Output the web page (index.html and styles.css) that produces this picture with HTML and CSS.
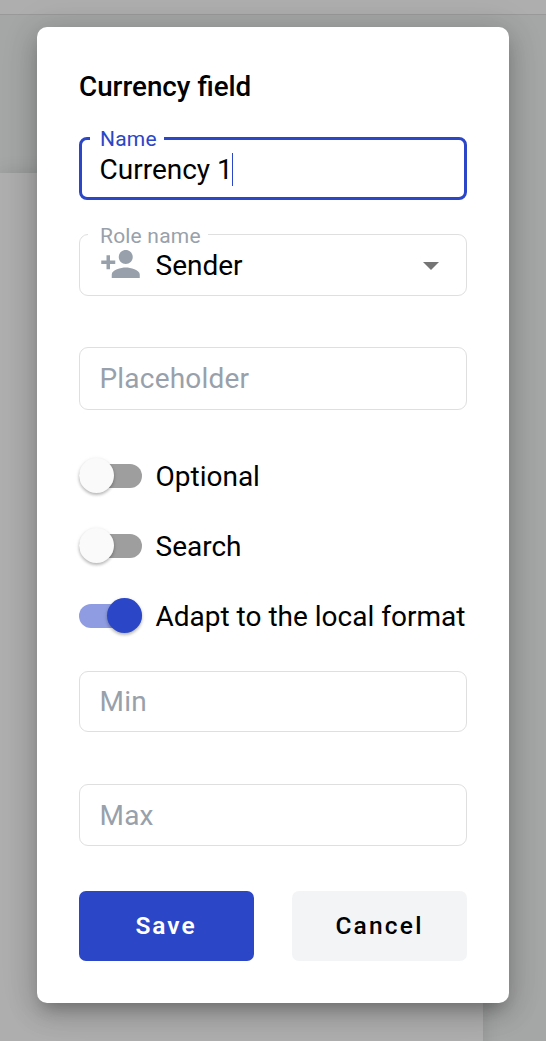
FILE: index.html
```html
<!DOCTYPE html>
<html lang="en">
<head>
<meta charset="utf-8">
<title>Currency field</title>
<link rel="stylesheet" href="styles.css">
</head>
<body>
<div class="backdrop"><div class="toolbar"></div><div class="canvas"><div class="sheet"></div></div></div>
<form class="dialog">
  <h1 class="title">Currency field</h1>
  <div class="field field-focused">
    <label class="field-label">Name</label>
    <span class="value">Currency 1</span><span class="caret"></span>
  </div>
  <div class="field field-role">
    <label class="field-label">Role name</label>
    <svg class="person" viewBox="1 4 22 16"><path d="M15 12c2.21 0 4-1.79 4-4s-1.79-4-4-4-4 1.79-4 4 1.79 4 4 4zm-9-2V7H4v3H1v2h3v3h2v-3h3v-2H6zm9 4c-2.67 0-8 1.34-8 4v2h16v-2c0-2.66-5.33-4-8-4z"/></svg>
    <span class="value">Sender</span>
    <svg class="arrow" viewBox="0 0 16 8"><path d="M0 0h16L8 8z"/></svg>
  </div>
  <div class="field field-placeholder"><span class="hint">Placeholder</span></div>
  <div class="toggles">
    <div class="toggle"><span class="track"><span class="thumb"></span></span><span class="toggle-text">Optional</span></div>
    <div class="toggle"><span class="track"><span class="thumb"></span></span><span class="toggle-text">Search</span></div>
    <div class="toggle toggle-on"><span class="track"><span class="thumb"></span></span><span class="toggle-text">Adapt to the local format</span></div>
  </div>
  <div class="field field-min"><span class="hint">Min</span></div>
  <div class="field field-max"><span class="hint">Max</span></div>
  <div class="actions">
    <button type="button" class="button button-save">Save</button>
    <button type="button" class="button button-cancel">Cancel</button>
  </div>
</form>
</body>
</html>
```
FILE: styles.css
```css
* { box-sizing: border-box; }
body {
  margin: 0;
  height: 1041px;
  padding: 27px 37px 38px;
  overflow: hidden;
  background: #a5a6a6;
  font-family: Roboto, sans-serif;
  font-size: 28px;
  color: #000;
}
.backdrop { position: absolute; inset: 0; overflow: hidden; }
.toolbar { height: 15px; background: #aeaeae; border-bottom: 1px solid #999; }
.canvas { padding-top: 158px; }
.sheet { width: 483px; height: 900px; background: #aeaeae; box-shadow: 0 0 18px rgba(0, 0, 0, .12); }
.dialog {
  position: relative;
  display: flex;
  flex-direction: column;
  width: 472px;
  height: 976px;
  padding: 42px;
  border-radius: 10px;
  background: #fff;
  box-shadow: 0 11px 15px -7px rgba(0, 0, 0, .2), 0 9px 28px 2px rgba(0, 0, 0, .2), 0 2px 40px 5px rgba(0, 0, 0, .06);
}
.title { margin: 0 0 33px; font-size: 27.8px; line-height: 35px; font-weight: 500; }
.field {
  position: relative;
  display: flex;
  align-items: center;
  flex: none;
  height: 62px;
  padding: 0 19.5px;
  border: 1px solid #dfdfdf;
  border-radius: 9px;
}
.field-focused { height: 63px; padding: 2px 17.5px 0; border: 3px solid #2b46c6; border-radius: 8px; }
.field-label {
  position: absolute;
  top: -12px;
  left: 8px;
  padding: 0 7px 0 12px;
  background: #fff;
  color: #98a1ab;
  font-size: 21px;
  line-height: 26px;
  letter-spacing: .2px;
}
.field-focused .field-label { top: -14px; left: 8px; padding: 0 7px 0 10px; color: #2b46c6; }
.value { line-height: 33px; }
.caret { width: 1px; height: 33px; margin-left: -1px; background: #2b46c6; }
.field-role { margin-top: 34px; }
.person { width: 39px; height: 28px; margin: 0 15.5px 2px 1.5px; fill: #98a1ab; }
.arrow { width: 16px; height: 8px; margin: 1px 7.5px 0 auto; fill: #757575; }
.field-placeholder { height: 63px; margin-top: 51px; }
.hint { color: #98a1ab; letter-spacing: .2px; }
.toggles { display: grid; gap: 35px; margin: 48px 0 38px; }
.toggle { display: flex; align-items: center; gap: 13.5px; height: 35px; white-space: nowrap; }
.toggle-text { padding-top: 2px; }
.track { display: flex; align-items: center; flex: none; width: 63px; height: 24px; border-radius: 12px; background: #9e9e9e; }
.thumb {
  flex: none;
  width: 35px;
  height: 35px;
  border-radius: 50%;
  background: #fafafa;
  box-shadow: 0 2px 3px rgba(0, 0, 0, .22), 0 1px 4px rgba(0, 0, 0, .1);
}
.toggle-on .track { justify-content: flex-end; background: #8f9ce1; }
.toggle-on .thumb { background: #2b46c6; }
.field-min { height: 61px; }
.field-max { margin-top: 52px; }
.actions { display: flex; justify-content: space-between; margin-top: 45px; }
.button {
  width: 175px;
  height: 70px;
  padding: 0;
  border: 0;
  border-radius: 7px;
  font: 500 24.5px/70px Roboto, sans-serif;
  letter-spacing: 2.2px;
}
.button-save { padding-right: 1px; background: #2b46c6; color: #fff; font-weight: 600; letter-spacing: 2px; }
.button-cancel { background: #f3f4f6; color: #000; }
```
